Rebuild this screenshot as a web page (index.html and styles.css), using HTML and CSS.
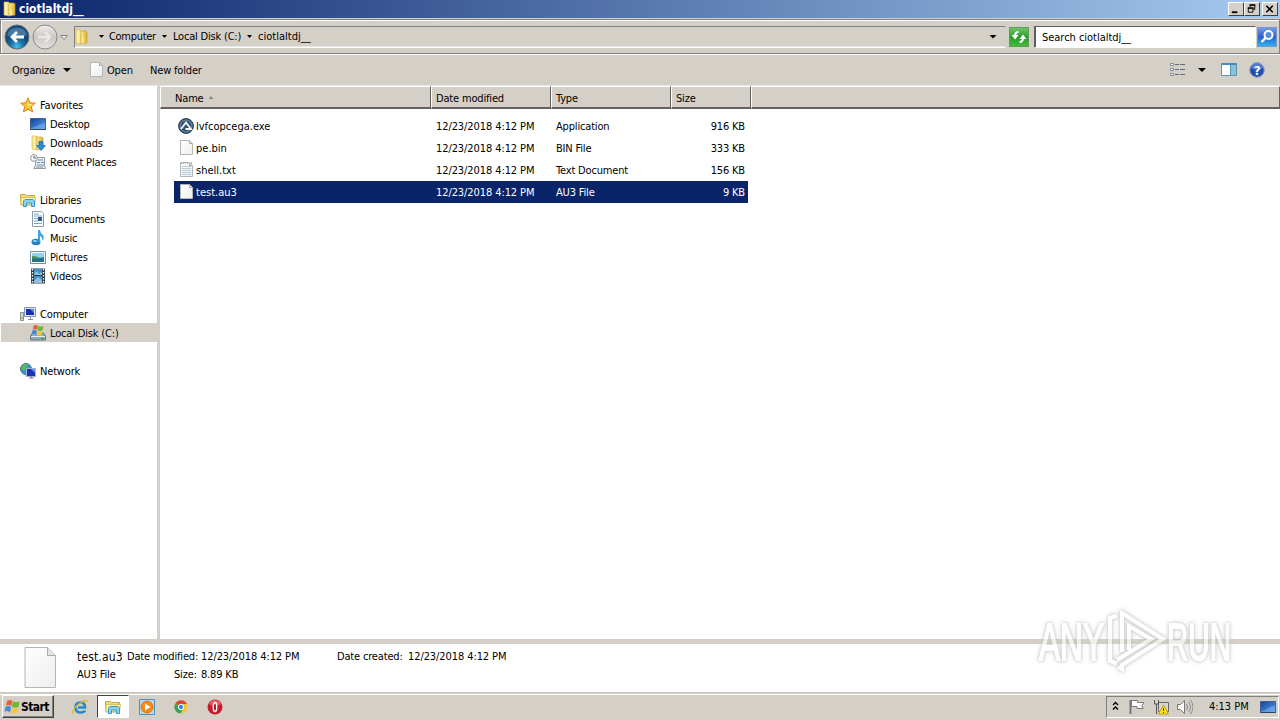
FILE: index.html
```html
<!DOCTYPE html>
<html lang="en">
<head>
<meta charset="utf-8">
<title>ciotlaltdj__</title>
<link rel="stylesheet" href="styles.css">
</head>
<body>
<svg class="defs" aria-hidden="true">
  <defs>
    <linearGradient id="gold" x1="0" x2="1"><stop offset="0" stop-color="#fbf0a5"/><stop offset=".5" stop-color="#edcf5c"/><stop offset="1" stop-color="#d9ae38"/></linearGradient>
    <linearGradient id="blue" x1="0" x2="1" y2="1"><stop offset="0" stop-color="#123f9b"/><stop offset="1" stop-color="#5ca4ee"/></linearGradient>
    <radialGradient id="back" cy=".9"><stop offset="0" stop-color="#43c4ee"/><stop offset=".55" stop-color="#1b70a8"/><stop offset="1" stop-color="#174b7c"/></radialGradient>
    <linearGradient id="forward" y2="1" x2="0"><stop offset="0" stop-color="#eeeeec"/><stop offset=".5" stop-color="#c9c8c4"/><stop offset="1" stop-color="#e5e4e1"/></linearGradient>
    <linearGradient id="green" x2="0" y2="1"><stop offset="0" stop-color="#79c66b"/><stop offset=".5" stop-color="#279c2b"/><stop offset="1" stop-color="#46bd3c"/></linearGradient>
    <linearGradient id="find" x2="0" y2="1"><stop offset="0" stop-color="#7e9bea"/><stop offset=".5" stop-color="#2861cf"/><stop offset="1" stop-color="#31b5ef"/></linearGradient>
    <linearGradient id="paper" x2="1" y2="1"><stop offset="0" stop-color="#fff"/><stop offset="1" stop-color="#eee"/></linearGradient>
  </defs>
  <symbol id="folder" viewBox="0 0 16 16"><path d="M2 1h5v14l-5-1z" fill="#f7e58c" stroke="#d8b64a" stroke-width=".6"/><path d="M7 2h5l1 1v11l-6 1z" fill="url(#gold)" stroke="#caa032" stroke-width=".6"/><path d="M4 1v13M9 9v5" stroke="#fff7c4"/></symbol>
  <symbol id="file" viewBox="0 0 16 16"><path d="M2.500.5h9l3 3v11h-12z" fill="url(#paper)" stroke="#b5b5b5"/><path d="M11.500.5v3h3" fill="#ddd" stroke="#aaa"/></symbol>
  <symbol id="desktop" viewBox="0 0 16 16"><path d="M.5 2.500h15v11H.5z" fill="url(#blue)" stroke="#3f6090"/><path d="M1 12c4 0 7-4 14-5v6H1z" fill="#78b5ec" opacity=".55"/><path d="M.5 13.500h15" stroke="#24415f"/></symbol>
  <symbol id="library" viewBox="0 0 16 16"><path d="M.5 4V2.500h5l1 1h8V13H1z" fill="#f0dc78" stroke="#c4a649"/><path d="M1 5.500h14.500l-1 7H1z" fill="#fbf0a4" stroke="#d8c264"/><path d="M3.500 14.500V9L5 7.500h8L14.500 9v5.500h-3V11h-5v3.500z" fill="#8bd1f1" stroke="#379bc9"/></symbol>
  <symbol id="monitor" viewBox="0 0 16 16"><path d="M4.500 1.500h11v9h-11z" fill="#dce5f2" stroke="#8494b1"/><path d="M6 3h8v6H6z" fill="#1730b2"/><path d="M10 3h4v4z" fill="#568be8"/><path d="M8 13.500h5M10.500 11v2" stroke="#8790a0"/><path d="M.5 6.500h3v8h-3z" fill="#d8ded4" stroke="#869083"/><path d="M1 12h2" stroke="#4da951"/></symbol>
  <symbol id="winflag" viewBox="0 0 16 14"><path d="M3 1q3-2 5.500 0L7.500 6Q4 4 2 6z" fill="#e9622d"/><path d="M9 1.500q3 1 6.500 0L14.500 7q-3 1-6.500 0z" fill="#70b738"/><path d="M1.500 7q3-2 5.500 0l-1 5.500Q3 10 .5 12z" fill="#438bdc"/><path d="M7.800 8q3 1 6.500 0l-1 5q-3 1-6.500-1z" fill="#f7c72d"/></symbol>
</svg>

<main class="screen">
  <header class="titlebar">
    <svg class="i16"><use href="#folder"/></svg><b>ciotlaltdj__</b>
    <div class="winbtns">
      <svg class="wbtn" viewBox="0 0 15 13"><path d="M3 10h6" stroke="#000" stroke-width="2"/></svg>
      <svg class="wbtn" viewBox="0 0 15 13"><path d="M5 2.500h6M5.500 2v3M10.500 2v5H9M3 5.500h6M3.500 5v5h5V5" fill="none" stroke="#000"/><path d="M5 2h6M3 5.500h6" stroke="#000" stroke-width="1.500"/></svg>
      <svg class="wbtn gap" viewBox="0 0 15 13"><path d="m3.500 3 7 7m0-7-7 7" stroke="#000" stroke-width="1.700"/></svg>
    </div>
  </header>

  <nav class="navbar">
    <svg class="navkeys" viewBox="0 0 70 32">
      <circle cx="15" cy="16" r="12" fill="url(#back)" stroke="#626e78"/><path d="M5 14a10.500 10.500 0 0 1 20 0Q15 19 5 14z" fill="#9fcbe5" opacity=".35"/><path d="M22 16H10m5-5-5 5 5 5" fill="none" stroke="#fff" stroke-width="2.800"/>
      <circle cx="43" cy="16" r="12" fill="url(#forward)" stroke="#898989"/><path d="M36 16h12m-5-5 5 5-5 5" fill="none" stroke="#e9e8e5" stroke-width="2.500"/>
      <path d="M58.500 14.500h7L62 18.500z" fill="#eee" stroke="#888"/>
    </svg>
    <div class="address">
      <svg class="i16"><use href="#folder"/></svg>
      <i class="arrow first"></i><span class="c1">Computer</span><i class="arrow"></i><span class="c2">Local Disk (C:)</span><i class="arrow"></i><span class="c3">ciotlaltdj__</span>
      <i class="arrow big last"></i>
    </div>
    <svg class="refresh" viewBox="0 0 20 20"><rect x=".5" y=".5" width="19" height="19" fill="url(#green)" stroke="#5d9c5b"/><path d="M9.500 5Q6 5 6 9M10.500 15q3.500 0 3.500-4" fill="none" stroke="#fff" stroke-width="2"/><path d="M2.500 8h7L6 12.500zM10.500 12h7L14 7.500z" fill="#fff"/></svg>
    <div class="search">Search ciotlaltdj__</div>
    <svg class="find" viewBox="0 0 20 20"><rect x=".5" y=".5" width="19" height="19" fill="url(#find)" stroke="#7896ce"/><circle cx="11.500" cy="8" r="4" fill="#568bdd" stroke="#fff" stroke-width="2"/><path d="m8.500 11-4 4" stroke="#fff" stroke-width="2.400"/></svg>
  </nav>

  <div class="toolbar">
    <span class="organize">Organize</span><i class="arrow big"></i>
    <svg class="i16 openicon"><use href="#file"/></svg><span class="open">Open</span><span>New folder</span>
    <div class="tools">
      <svg class="i16" viewBox="0 0 16 16"><path d="M.5 1.500h3v2h-3zM.5 6.500h3v2h-3zM.5 11.500h3v2h-3z" fill="#fff" stroke="#808890"/><path d="M5 2.500h4m1 0h5M5 7.500h4m1 0h5M5 12.500h4m1 0h5" stroke="#606c76"/></svg>
      <i class="arrow big"></i>
      <svg class="i16 pane" viewBox="0 0 16 16"><path d="M.5 1.500h15v12H.5z" fill="#fff" stroke="#5f91b1"/><path d="M.5 2h15" stroke="#438dbb" stroke-width="2"/><path d="M10 3h5v10h-5z" fill="#86c2dd"/><path d="M9.500 3v10" stroke="#5f91b1"/></svg>
      <svg class="i16" viewBox="0 0 16 16"><circle cx="8" cy="8" r="7.200" fill="#1d4db5" stroke="#8794b2"/><path d="M2 6a6 6 0 0 1 12 0q-6 4-12 0z" fill="#7498df" opacity=".6"/><text x="4.800" y="12.500" class="qmark">?</text></svg>
    </div>
  </div>

  <section class="body">
    <aside class="tree">
      <div class="node"><svg class="i16" viewBox="0 0 16 16"><path d="m8 .8 2 5 5.300.4-4 3.500 1.300 5.200L8 12.200l-4.600 2.700 1.300-5.200-4-3.500L6 5.800z" fill="#ffc331" stroke="#dd8323"/><path d="m8 3 1 4 4 0-5 3z" fill="#ffe77c"/></svg>Favorites</div>
      <div class="node sub"><svg class="i16"><use href="#desktop"/></svg>Desktop</div>
      <div class="node sub"><svg class="i16"><use href="#folder"/><path d="M9 6.500h4v4h2.500l-4.500 5-4.500-5H9z" fill="#268bd8" stroke="#1265aa" stroke-width=".7"/></svg>Downloads</div>
      <div class="node sub"><svg class="i16" viewBox="0 0 16 16"><path d="M5.500 3.500h9v8l1 3h-12l2-3z" fill="#e7edf1" stroke="#8f9ca6"/><path d="M8 6h5M7 8.500h3m1 0h3M7 11h7M6 13h7" stroke="#7896ad"/><circle cx="4" cy="4" r="3.400" fill="#f7fbfc" stroke="#8a9499"/><path d="M4 2v2h2" fill="none" stroke="#555"/></svg>Recent Places</div>
      <div class="node space"><svg class="i16"><use href="#library"/></svg>Libraries</div>
      <div class="node sub"><svg class="i16" viewBox="0 0 16 16"><path d="M2.500.5h9l2 2v13h-11z" fill="#fafdff" stroke="#8d9ca7"/><path d="M4 3h5M4 5h8M4 7.500h4M4 10h4M4 12.500h8" stroke="#7aa8cb"/><path d="M8 6h4v4H8z" fill="#315983"/></svg>Documents</div>
      <div class="node sub"><svg class="i16" viewBox="0 0 16 16"><ellipse cx="6" cy="12" rx="4.500" ry="3.300" fill="#2880c6"/><path d="M8 0h2q0 3 3 5 2 3-1 6 1-4-2-5v6H8z" fill="#3da1dc"/><ellipse cx="5" cy="11" rx="2" ry="1" fill="#93d7f6"/></svg>Music</div>
      <div class="node sub"><svg class="i16" viewBox="0 0 16 16"><path d="M.5 2.500h15v12H.5z" fill="#f8fcff" stroke="#7890a1"/><path d="M2 4h12v9H2z" fill="#8bd3f3"/><path d="M2 9q6 1 12-1v5H2z" fill="#23728a"/><path d="M2 7q5 0 8 2l-8 1z" fill="#438e59"/></svg>Pictures</div>
      <div class="node sub"><svg class="i16" viewBox="0 0 16 16"><path d="M1 .5h14v15H1z" fill="#303b48"/><path d="M4 1h8v6H4zM4 8h8v7H4z" fill="#3d91cf"/><path d="m4 6 3-3 2 3 3-2v3H4zM4 13l4-4 4 3v3H4z" fill="#91bfdc"/><path d="M2.500 1v15M13.500 1v15" stroke="#fff" stroke-width="1.300" stroke-dasharray="1.500"/></svg>Videos</div>
      <div class="node space"><svg class="i16"><use href="#monitor"/></svg>Computer</div>
      <div class="node sub selected"><svg class="i16" viewBox="0 0 16 16"><path d="m.5 11 2-3h11l2 3v4H.5z" fill="#8eabb9" stroke="#637783"/><path d="M1 11.500h14" stroke="#e6f0f3"/><path d="M11 13.500h3" stroke="#35a557" stroke-width="1.500"/><use href="#winflag" x="1" width="13" height="11"/></svg>Local Disk (C:)</div>
      <div class="node space"><svg class="i16" viewBox="0 0 16 16"><circle cx="6" cy="6" r="5.500" fill="#3895ce" stroke="#447a8f"/><path d="M2 3q4-4 6-1L6 5 4 8 1 6zM6 7h4l-3 4z" fill="#57b75b"/><path d="M6.500 5.500h9v8h-9z" fill="#1735b3" stroke="#a3b2d2"/><path d="M11 6h4v4z" fill="#6797ed"/><path d="M9 15h5M11.500 13v2" stroke="#7c8594"/></svg>Network</div>
    </aside>
    <section class="list">
      <div class="row head"><span>Name <i class="sort"></i></span><span>Date modified</span><span>Type</span><span>Size</span><span></span></div>
      <div class="row item"><span class="name"><svg class="i16" viewBox="0 0 16 16"><circle cx="8" cy="8" r="7.400" fill="#35536f" stroke="#22364c"/><circle cx="8" cy="8" r="6" fill="none" stroke="#91a9bb" stroke-width=".7"/><path d="M3 11 8 4.500 13 11H7.500" fill="none" stroke="#f2f5f6" stroke-width="1.800"/></svg>lvfcopcega.exe</span><span class="date">12/23/2018 4:12 PM</span><span>Application</span><span class="size">916 KB</span></div>
      <div class="row item"><span class="name"><svg class="i16"><use href="#file"/></svg>pe.bin</span><span class="date">12/23/2018 4:12 PM</span><span>BIN File</span><span class="size">333 KB</span></div>
      <div class="row item"><span class="name"><svg class="i16"><use href="#file"/><path d="M4 4.500h9M4 6.500h9M4 8.500h9M4 10.500h9M4 12.500h9" stroke="#b5cbd5"/><path d="M3 1h11" stroke="#a2b8c2" stroke-width="2" stroke-dasharray="1"/></svg>shell.txt</span><span class="date">12/23/2018 4:12 PM</span><span>Text Document</span><span class="size">156 KB</span></div>
      <div class="row item picked"><span class="name"><svg class="i16"><use href="#file"/></svg>test.au3</span><span class="date">12/23/2018 4:12 PM</span><span>AU3 File</span><span class="size">9 KB</span></div>
    </section>
  </section>

  <footer class="details">
    <svg class="bigfile" viewBox="0 0 32 42"><path d="M1 .5h22.500l8 8v32H1z" fill="url(#paper)" stroke="#b5b5b5"/><path d="M23.500.500v8h8" fill="#e3e3e3" stroke="#aaa"/></svg>
    <div class="facts">
      <div><span class="fname">test.au3</span><span class="modified">Date modified:</span><span class="date1 date">12/23/2018 4:12 PM</span><span class="created">Date created:</span><span class="date">12/23/2018 4:12 PM</span></div>
      <div><span class="ftype">AU3 File</span><span class="sizelabel">Size:</span><span>8.89 KB</span></div>
    </div>
  </footer>

  <div class="taskbar">
    <div class="start"><svg viewBox="0 0 16 14"><use href="#winflag"/></svg><b>Start</b></div>
    <svg class="i16 ie" viewBox="0 0 16 16"><path d="M13 11.500Q12 13.500 8.500 13.500 3.500 13.500 3.500 8.500 3.500 3.500 8.500 3.500q4.500 0 4.500 5H6" fill="none" stroke="#248ad0" stroke-width="2.600"/><path d="M1 15Q-1 11 7 5q8-6 8-2" fill="none" stroke="#e5b42c" stroke-width="1.300"/></svg>
    <div class="active"><svg class="i16"><use href="#library"/></svg></div>
    <svg class="i16 media" viewBox="0 0 16 16"><path d="M.5.500h15v15H.5z" fill="#b9dcf3" stroke="#4d91c2"/><circle cx="8" cy="8" r="6" fill="#f18b1d" stroke="#df7416"/><path d="m6 4.500 5.500 3.500L6 11.500z" fill="#fff"/></svg>
    <svg class="i16 chrome" viewBox="0 0 16 16"><circle cx="8" cy="8" r="6.500" fill="#f3c82c"/><path d="M8 8 2.300 4.700A6.500 6.500 0 0 1 14 5H8z" fill="#df4439"/><path d="M8 8 2.300 4.700A6.500 6.500 0 0 0 7.500 14.500L10 10z" fill="#32a45a"/><circle cx="8" cy="8" r="2.700" fill="#4285e7" stroke="#fff"/></svg>
    <svg class="i16 opera" viewBox="0 0 16 16"><circle cx="8" cy="8" r="7.500" fill="#c51d2c"/><path d="M2 5a6.500 6.500 0 0 1 12 0q-6 3-12 0z" fill="#e65c62"/><ellipse cx="8" cy="8" rx="1.700" ry="4.500" fill="#a40d1b" stroke="#fff" stroke-width="1.500"/></svg>
    <div class="tray">
      <svg class="chev" viewBox="0 0 7 10"><path d="m1 4 2.500-2.500L6 4M1 8.500 3.500 6 6 8.500" fill="none" stroke="#000" stroke-width="1.400"/></svg>
      <svg class="i16 flag" viewBox="0 0 16 16"><path d="M1.500 1v14" stroke="#777" stroke-width="2"/><path d="M2.500 1.500h6v2h6.500l-2 3 1 3H8v-2H2.500z" fill="#fff" stroke="#777"/></svg>
      <svg class="i16 net" viewBox="0 0 16 16"><path d="M5.500 3.500h10v9h-10z" fill="#d5d5d5" stroke="#666"/><path d="M1.500 1v4h4V1M3.500 5v10" fill="none" stroke="#555"/><path d="m10.500 6 5 9h-10z" fill="#ffe22b" stroke="#c59b00"/><path d="M10.500 9v3m0 1v1" stroke="#333"/></svg>
      <svg class="i16 sound" viewBox="0 0 16 16"><path d="M.5 5.500h3l4-4v13l-4-4h-3z" fill="#fff" stroke="#777"/><path d="M9.500 5q2 3 0 6M11.500 3q4 5 0 10M13.500 1q5 7 0 14" fill="none" stroke="#888"/></svg>
      <span>4:13 PM</span>
      <svg class="i16 show"><use href="#desktop"/></svg>
    </div>
  </div>

  <svg class="watermark" viewBox="0 0 210 72">
    <g class="mark"><text x="5" y="54" textLength="65" lengthAdjust="spacingAndGlyphs">ANY</text><text x="133" y="54" textLength="64" lengthAdjust="spacingAndGlyphs">RUN</text>
    <path d="M83 9.500 76 12v43l7 2.500M88 46V7l41 26-41 26v4l-4-2M95 44V20l22 13-34 21"/></g>
  </svg>
</main>
</body>
</html>
```
FILE: styles.css
```css
* { box-sizing: border-box; }
body { margin: 0; overflow: hidden; background: #d4d0c8; color: #000; font: 11px/14px "DejaVu Sans Condensed", "DejaVu Sans", sans-serif; font-stretch: condensed; letter-spacing: -.17px; }
svg { display: block; flex: none; }
span, b { white-space: pre; }
.defs { position: absolute; width: 0; height: 0; }
.screen { position: relative; width: 1280px; height: 720px; display: flex; flex-direction: column; }
.i16 { width: 16px; height: 16px; }
.titlebar { height: 18px; flex: none; display: flex; align-items: center; gap: 1px; padding: 0 2px; color: #fff; background: linear-gradient(90deg, #0a246a, #a6caf0); }
.titlebar b { font-size: 12px; letter-spacing: 0; }
.winbtns { display: flex; margin-left: auto; }
.wbtn { width: 16px; height: 14px; background: #d4d0c8; border: 1px solid; border-color: #fff #404040 #404040 #fff; }
.gap { margin-left: 2px; }

.navbar { height: 35px; flex: none; display: flex; align-items: center; border: 1px solid #808080; box-shadow: inset 1px 1px #fff, 0 1px #fff; margin-top: 1px; padding: 0 2px; }
.navkeys { width: 70px; height: 32px; margin-left: -1px; }
.address { flex: 1; margin-left: 2px; height: 22px; display: flex; align-items: center; border: 1px solid; border-color: #808080 #d4d0c8 #fff #808080; box-shadow: inset 0 -1px #e8e6e1; }
.address .i16 { margin-left: -1px; }
.address span { letter-spacing: -.2px; }
.arrow { width: 5px; height: 3px; background: #000; clip-path: polygon(0 0, 100% 0, 50% 100%); flex: none; margin: 0 6px 0 5px; }
.arrow.big { width: 8px; height: 4px; }
.arrow.first { margin-left: 9px; margin-right: 5px; }
.address .c1 { width: 48px; letter-spacing: -.3px; }
.c2 { width: 69px; }
.address .c3 { letter-spacing: .02px; }
.arrow.last { margin-left: auto; margin-right: 8px; }
.refresh { width: 20px; height: 20px; margin-left: 3px; }
.search { width: 222px; height: 22px; margin-left: 5px; padding: 4px 7px; background: #fff; border: 1px solid; border-color: #606060 #fff #fff #606060; box-shadow: inset 1px 0 #606060; letter-spacing: -.03px; }
.find { width: 20px; height: 20px; margin-left: 1px; }

.toolbar { height: 31px; flex: none; display: flex; align-items: center; padding: 1px 15px 0 12px; }
.toolbar > span { padding-top: 1px; }
.organize { width: 46px; }
.openicon { margin: 0 0 0 11px; }
.open { margin-left: 3px; width: 43px; }
.tools { margin-left: auto; display: flex; align-items: center; }
.tools .arrow { margin: 0 15px 0 12px; }
.pane { margin-right: 12px; }
.qmark { font: bold 12px "DejaVu Sans"; fill: #fff; letter-spacing: 0; }

.body { height: 554px; flex: none; display: flex; background: #fff; border-top: 1px solid #e9e7e3; }
.tree { width: 160px; border-right: 3px solid #d4d0c8; padding-top: 9px; }
.node { height: 19px; padding: 3px 0 0 20px; display: flex; align-items: center; gap: 4px; }
.node svg { margin: -3px 0 0; }
.sub { padding-left: 30px; }
.space { margin-top: 19px; }
.selected { background: #d4d0c8; margin-left: 1px; padding-left: 29px; }
.list { flex: 1; }
.row { display: grid; grid-template-columns: 271px 120px 120px 80px 1fr; align-items: center; }
.head { height: 23px; margin-bottom: 6px; }
.head span { height: 23px; padding: 5px 4px 0; background: #d4d0c8; border: solid; border-width: 1px 1px 2px 1px; border-color: #fff #606060 #606060 #fff; }
.head span:first-child { padding-left: 14px; }
.sort { display: inline-block; width: 5px; height: 3px; margin: 0 0 3px 2px; background: #888; clip-path: polygon(50% 0, 100% 100%, 0 100%); }
.item { height: 22px; margin-left: 14px; width: 574px; padding-top: 1px; grid-template-columns: 262px 120px 120px 1fr; }
.name { display: flex; align-items: center; gap: 2px; padding-left: 4px; letter-spacing: 0; }
.date { letter-spacing: -.09px; }
.name svg { margin: -3px 0 -1px; }
.size { text-align: right; padding-right: 3px; }
.picked { color: #fff; background: #0a246a; }

.details { height: 54px; flex: none; display: flex; background: #fff; border-top: 5px solid #d4d0c8; border-bottom: 1px solid #c9c5bd; }
.bigfile { width: 32px; height: 42px; margin: 3px 0 0 24px; }
.facts { padding: 4px 0 0 21px; display: grid; grid-template-rows: 18px 18px; }
.facts div { display: flex; height: 18px; align-items: center; }
.fname { font-size: 12px; width: 50px; letter-spacing: .15px; }
.modified { width: 74px; }
.date1 { width: 136px; }
.created { width: 71px; }
.ftype { width: 97px; }
.sizelabel { width: 27px; }

.taskbar { flex: 1; display: flex; align-items: center; margin-top: 1px; border-top: 1px solid #fff; padding-bottom: 2px; }
.start { width: 52px; height: 23px; margin-left: 2px; display: flex; align-items: center; gap: 1px; border: 1px solid; border-color: #fff #404040 #404040 #fff; box-shadow: inset -1px -1px #808080; padding-left: 1px; font-size: 12px; letter-spacing: -.6px; }
.start svg { width: 16px; height: 16px; }
.ie { margin-left: 18px; }
.active { width: 32px; height: 23px; margin-left: 9px; padding: 3px 7px; background: #fff; border: 1px solid; border-color: #404040 #fff #fff #404040; }
.media { margin-left: 10px; }
.chrome { margin-left: 18px; }
.opera { margin-left: 18px; }
.tray { width: 173px; height: 22px; margin: 0 1px 0 auto; display: flex; align-items: center; border: 1px solid; border-color: #808080 #fff #fff #808080; padding-left: 5px; }
.chev { width: 7px; height: 10px; margin-top: -2px; }
.flag { margin-left: 10px; }
.net { margin-left: 8px; }
.sound { margin-left: 8px; }
.tray span { margin-left: 16px; width: 51px; padding-top: 1px; letter-spacing: -.03px; }
.watermark { position: absolute; left: 1034px; top: 606px; width: 210px; height: 72px; overflow: visible; }
.mark { font: 51px "Liberation Sans Narrow", "Liberation Sans", sans-serif; letter-spacing: 0; fill: #fff; stroke: #fff; stroke-width: 2px; filter: drop-shadow(0 0 1.500px #aaa) drop-shadow(0 0 2px #ccc); opacity: .65; }
.mark path { fill: none; stroke-width: 4px; }
```
